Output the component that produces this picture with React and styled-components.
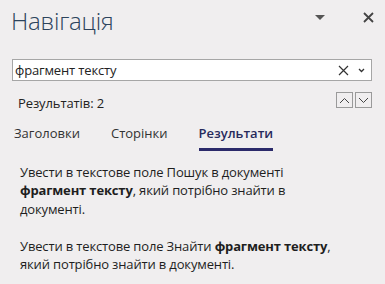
import React from 'react';
import styled, { createGlobalStyle } from 'styled-components';

const Global = createGlobalStyle`
  html, body { margin: 0; padding: 0; }
  body {
    background: #f0eeef;
    font-family: "Open Sans", "Noto Sans", sans-serif;
    color: #222;
  }
`;

const Pane = styled.div`
  width: 385px;
  height: 284px;
  overflow: hidden;
  background: #f0eeef;
`;

const Header = styled.div`
  display: flex;
  align-items: flex-start;
  height: 44px;
  padding: 0 10px 0 11px;
`;

const Title = styled.div`
  flex: 1;
  padding-top: 5px;
  font-size: 24px;
  line-height: 32px;
  font-weight: 300;
  color: #2c435c;
  letter-spacing: -0.2px;
`;

const IconBtn = styled.div`
  width: ${p => p.$w || 20}px;
  height: ${p => p.$h || 20}px;
  display: flex;
  justify-content: center;
  align-items: center;
  margin-left: ${p => p.$ml || 0}px;
  margin-top: ${p => p.$mt || 0}px;
  color: #444;
`;

const Search = styled.div`
  display: flex;
  align-items: center;
  height: 20px;
  margin: 15px 13px 0 12px;
  padding-right: 4px;
  border: 1px solid #a6a6a6;
  background: #fff;
`;

const SearchText = styled.div`
  flex: 1;
  padding-left: 2px;
  font-size: 13px;
  letter-spacing: -0.15px;
  color: #222;
`;

const ResultsRow = styled.div`
  display: flex;
  align-items: flex-start;
  height: 33px;
  padding: 11px 13px 0 18px;
  box-sizing: border-box;
`;

const Count = styled.div`
  flex: 1;
  padding-top: 2px;
  font-size: 13px;
  line-height: 18px;
  letter-spacing: -0.1px;
`;

const Arrow = styled.div`
  width: 15px;
  height: 14px;
  border: 1px solid #9a9a9a;
  margin-left: 2px;
  display: flex;
  align-items: center;
  justify-content: center;
  background: #f0eeef;
`;

const Tabs = styled.div`
  display: flex;
  padding-left: 14px;
  gap: 31px;
  height: 37px;
`;

const Tab = styled.div`
  position: relative;
  font-size: 13px;
  line-height: 18px;
  font-weight: ${p => (p.$active ? 600 : 400)};
  color: ${p => (p.$active ? '#272a5c' : '#333')};
  padding-top: 10px;
  &::after {
    content: '';
    display: ${p => (p.$active ? 'block' : 'none')};
    position: absolute;
    left: 0;
    right: 0;
    bottom: 0;
    height: 3px;
    background: #2b2a6a;
  }
`;

const Body = styled.div`
  padding: 12px 20px 0 20px;
  font-size: 13px;
  line-height: 18.4px;
  letter-spacing: -0.15px;
  color: #1e1e1e;
  white-space: nowrap;
`;

const Para = styled.p`
  margin: 0 0 18.6px 0;
  b { font-weight: 700; }
`;

export default function App() {
  return (
    <Pane>
      <Global />
      <Header>
        <Title>Навігація</Title>
        <IconBtn $w={14} $mt={8}>
          <svg width="10" height="6" viewBox="0 0 10 6">
            <path d="M0 0 H10 L5 5 Z" fill="#555" />
          </svg>
        </IconBtn>
        <IconBtn $w={14} $ml={34} $mt={7}>
          <svg width="11" height="11" viewBox="0 0 11 11">
            <path d="M1 1 L10 10 M10 1 L1 10" stroke="#444" strokeWidth="1.8" />
          </svg>
        </IconBtn>
      </Header>
      <Search>
        <SearchText>фрагмент тексту</SearchText>
        <IconBtn $w={14}>
          <svg width="11" height="11" viewBox="0 0 11 11">
            <path d="M1 1 L10 10 M10 1 L1 10" stroke="#333" strokeWidth="1.2" />
          </svg>
        </IconBtn>
        <IconBtn $w={12} $ml={5}>
          <svg width="7" height="5" viewBox="0 0 7 5">
            <path d="M1 1 L3.5 3.5 L6 1" stroke="#333" strokeWidth="1.3" fill="none" />
          </svg>
        </IconBtn>
      </Search>
      <ResultsRow>
        <Count>Результатів: 2</Count>
        <Arrow>
          <svg width="11" height="7" viewBox="0 0 11 7">
            <path d="M1 6 L5.5 1.5 L10 6" stroke="#444" strokeWidth="1" fill="none" />
          </svg>
        </Arrow>
        <Arrow>
          <svg width="11" height="7" viewBox="0 0 11 7">
            <path d="M1 1 L5.5 5.5 L10 1" stroke="#444" strokeWidth="1" fill="none" />
          </svg>
        </Arrow>
      </ResultsRow>
      <Tabs>
        <Tab>Заголовки</Tab>
        <Tab>Сторінки</Tab>
        <Tab $active>Результати</Tab>
      </Tabs>
      <Body>
        <Para>
          Увести в текстове поле Пошук в документі
          <br />
          <b>фрагмент тексту</b>, який потрібно знайти в
          <br />
          документі.
        </Para>
        <Para>
          Увести в текстове поле Знайти <b>фрагмент тексту</b>,
          <br />
          який потрібно знайти в документі.
        </Para>
      </Body>
    </Pane>
  );
}
